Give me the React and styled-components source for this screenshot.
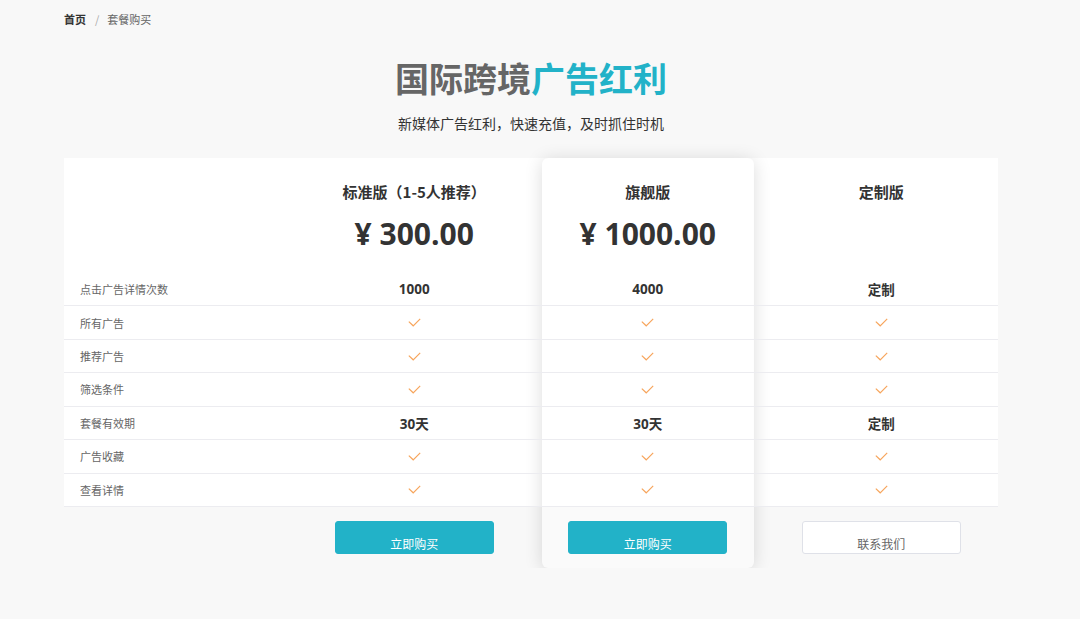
import React from "react";
import styled, { createGlobalStyle } from "styled-components";

const GlobalStyle = createGlobalStyle`
	html, body {
		margin: 0;
		padding: 0;
		background: #f8f8f8;
		font-family: "Open Sans", "Noto Sans CJK SC", sans-serif;
		color: #333;
	}
`;

const Page = styled.div`
	width: 934px;
	margin-left: 64px;
	padding-top: 11px;
`;

const Crumbs = styled.nav`
	display: flex;
	align-items: center;
	gap: 7px;
	font-size: 11px;
	line-height: 16px;
	color: #666;
	font-family: "Noto Sans CJK SC", sans-serif;
`;

const CrumbHome = styled.span`
	font-weight: 700;
	color: #333;
`;

const CrumbSep = styled.span`
	color: #aaa;
	margin: 0 1px 0 2px;
`;

const Hero = styled.header`
	display: flex;
	flex-direction: column;
	align-items: center;
	padding-top: 28px;
	font-family: "Noto Sans CJK SC", sans-serif;
`;

const Title = styled.h1`
	margin: 0;
	font-size: 34px;
	line-height: 46px;
	font-weight: 700;
	color: #666;
`;

const Accent = styled.span`
	color: #22b2c8;
`;

const Subtitle = styled.p`
	margin: 12px 0 0;
	font-size: 14px;
	line-height: 20px;
	color: #333;
`;

const Grid = styled.section`
	margin-top: 25px;
	display: grid;
	grid-template-columns: repeat(4, 1fr);
	grid-template-rows: 115px repeat(7, 33.43px) 61px;
`;

const Backdrop = styled.div`
	grid-column: 1 / -1;
	grid-row: 1 / 9;
	background: #fff;
`;

const Highlight = styled.div`
	grid-column: 3;
	grid-row: 1 / -1;
	margin: 0 11px;
	border-radius: 6px;
	background: linear-gradient(#fff, #fff) top / 100% 349px no-repeat, #fafafa;
	box-shadow: 0 2px 18px rgba(0, 0, 0, 0.14);
`;

const PlanHead = styled.div`
	grid-row: 1;
	grid-column: ${(p) => p.$col};
	display: flex;
	flex-direction: column;
	align-items: center;
	padding-top: 23px;
	z-index: 1;
`;

const PlanName = styled.h2`
	margin: 0;
	font-family: "Noto Sans CJK SC", sans-serif;
	font-size: 15px;
	line-height: 22px;
	font-weight: 700;
	color: #333;
`;

const Price = styled.div`
	margin-top: 11px;
	font-size: 30px;
	line-height: 40px;
	font-weight: 700;
	color: #333;
`;

const Cell = styled.div`
	grid-row: ${(p) => p.$row};
	grid-column: ${(p) => p.$col};
	display: flex;
	align-items: center;
	justify-content: ${(p) => (p.$label ? "flex-start" : "center")};
	padding-left: ${(p) => (p.$label ? "16px" : "0")};
	box-sizing: border-box;
	border-bottom: 1px solid #ececf0;
	font-family: "Open Sans", "Noto Sans CJK SC", sans-serif;
	font-size: ${(p) => (p.$label ? "11px" : "13.5px")};
	font-weight: ${(p) => (p.$label ? 400 : 700)};
	color: ${(p) => (p.$label ? "#666" : "#333")};
	z-index: 1;
`;

const Foot = styled.div`
	grid-row: 9;
	grid-column: ${(p) => p.$col};
	display: flex;
	justify-content: center;
	padding-top: 14px;
	z-index: 1;
`;

const Button = styled.button`
	width: 159px;
	height: 33px;
	box-sizing: border-box;
	padding: 14px 0 0;
	border-radius: 3px;
	border: 1px solid ${(p) => (p.$ghost ? "#dfe1e8" : "#22b2c8")};
	background: ${(p) => (p.$ghost ? "#fff" : "#22b2c8")};
	color: ${(p) => (p.$ghost ? "#666" : "#fff")};
	font-family: "Noto Sans CJK SC", sans-serif;
	font-size: 12px;
	line-height: 16px;
	cursor: pointer;
`;

const Check = () => (
	<svg width="13" height="9" viewBox="0 0 13 9" fill="none">
		<polyline points="0.8,3.6 5.2,7.8 12.2,0.8" stroke="#f7a55c" strokeWidth="1.2" />
	</svg>
);

const plans = [
	{ name: "标准版（1-5人推荐）", price: "¥ 300.00", action: "立即购买" },
	{ name: "旗舰版", price: "¥ 1000.00", action: "立即购买" },
	{ name: "定制版", price: "", action: "联系我们", ghost: true },
];

const features = [
	{ label: "点击广告详情次数", values: ["1000", "4000", "定制"] },
	{ label: "所有广告", values: [true, true, true] },
	{ label: "推荐广告", values: [true, true, true] },
	{ label: "筛选条件", values: [true, true, true] },
	{ label: "套餐有效期", values: ["30天", "30天", "定制"] },
	{ label: "广告收藏", values: [true, true, true] },
	{ label: "查看详情", values: [true, true, true] },
];

const App = () => {
	return (
		<>
			<GlobalStyle />
			<Page>
				<Crumbs>
					<CrumbHome>首页</CrumbHome>
					<CrumbSep>/</CrumbSep>
					<span>套餐购买</span>
				</Crumbs>
				<Hero>
					<Title>
						国际跨境<Accent>广告红利</Accent>
					</Title>
					<Subtitle>新媒体广告红利，快速充值，及时抓住时机</Subtitle>
				</Hero>
				<Grid>
					<Backdrop />
					<Highlight />
					{plans.map((plan, i) => (
						<PlanHead key={plan.name} $col={i + 2}>
							<PlanName>{plan.name}</PlanName>
							{plan.price && <Price>{plan.price}</Price>}
						</PlanHead>
					))}
					{features.map((f, r) => (
						<React.Fragment key={f.label}>
							<Cell $row={r + 2} $col={1} $label>
								{f.label}
							</Cell>
							{f.values.map((v, c) => (
								<Cell key={c} $row={r + 2} $col={c + 2}>
									{v === true ? <Check /> : v}
								</Cell>
							))}
						</React.Fragment>
					))}
					{plans.map((plan, i) => (
						<Foot key={plan.name} $col={i + 2}>
							<Button $ghost={plan.ghost}>{plan.action}</Button>
						</Foot>
					))}
				</Grid>
			</Page>
		</>
	);
};

export default App;
